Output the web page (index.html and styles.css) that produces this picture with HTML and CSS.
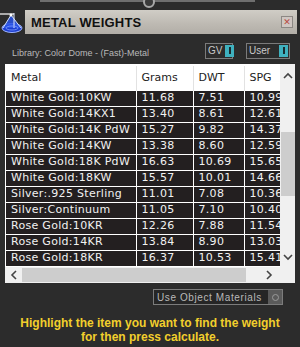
FILE: index.html
```html
<!DOCTYPE html>
<html>
<head>
<meta charset="utf-8">
<link rel="stylesheet" href="styles.css">
</head>
<body>
<div class="panel">
  <div class="topstrip"><span class="knob"></span></div>
  <div class="titlerow">
    <svg class="logo" width="25" height="24" viewBox="0 0 25 24">
      <ellipse cx="12" cy="18" rx="10" ry="4.5" fill="#1d3fd0" stroke="#9fb4ff" stroke-width="1"/>
      <path d="M3 18 L11 5 L21 18 Z" fill="#2a55e8" opacity="0.85"/>
      <path d="M3 18 L11 5 L21 18" fill="none" stroke="#cfe0ff" stroke-width="1"/>
      <path d="M0 4 L14 4" stroke="#ffffff" stroke-width="1.2"/>
      <path d="M14 3 L14 18" stroke="#dfe8ff" stroke-width="1"/>
      <circle cx="11" cy="5" r="1.5" fill="#ffffff"/>
      <ellipse cx="12" cy="18" rx="6" ry="2" fill="none" stroke="#7f9cff" stroke-width="0.8"/>
    </svg>
    <div class="titlebar">
      <span class="title">METAL WEIGHTS</span>
      <span class="close">✕</span>
    </div>
  </div>
  <div class="librow">
    <span class="lib">Library: Color Dome - (Fast)-Metal</span>
    <span class="toggles">
      <span class="tog tog-gv">GV<span class="sw"><i></i></span></span>
      <span class="tog tog-user">User<span class="sw"><i></i></span></span>
    </span>
  </div>
  <div class="grid">
    <div class="tablewrap">
      <table class="metals">
        <colgroup><col class="c1"><col class="c2"><col class="c3"><col class="c4"></colgroup>
        <thead>
          <tr><th>Metal</th><th>Grams</th><th>DWT</th><th>SPG</th></tr>
        </thead>
        <tbody>
          <tr><td>White Gold:10KW</td><td>11.68</td><td>7.51</td><td>10.99</td></tr>
          <tr><td>White Gold:14KX1</td><td>13.40</td><td>8.61</td><td>12.61</td></tr>
          <tr><td>White Gold:14K PdW</td><td>15.27</td><td>9.82</td><td>14.37</td></tr>
          <tr><td>White Gold:14KW</td><td>13.38</td><td>8.60</td><td>12.59</td></tr>
          <tr><td>White Gold:18K PdW</td><td>16.63</td><td>10.69</td><td>15.65</td></tr>
          <tr><td>White Gold:18KW</td><td>15.57</td><td>10.01</td><td>14.66</td></tr>
          <tr><td>Silver:.925 Sterling</td><td>11.01</td><td>7.08</td><td>10.36</td></tr>
          <tr><td>Silver:Continuum</td><td>11.05</td><td>7.10</td><td>10.40</td></tr>
          <tr><td>Rose Gold:10KR</td><td>12.26</td><td>7.88</td><td>11.54</td></tr>
          <tr><td>Rose Gold:14KR</td><td>13.84</td><td>8.90</td><td>13.03</td></tr>
          <tr><td>Rose Gold:18KR</td><td>16.37</td><td>10.53</td><td>15.41</td></tr>
        </tbody>
      </table>
    </div>
    <div class="vscroll">
      <span class="arrow up">
        <svg width="10" height="7" viewBox="0 0 10 7"><path d="M1 6 L5 2 L9 6" fill="none" stroke="#444" stroke-width="1.6"/></svg>
      </span>
      <span class="vtrack"><span class="vthumb"></span></span>
      <span class="arrow down">
        <svg width="10" height="7" viewBox="0 0 10 7"><path d="M1 1 L5 5 L9 1" fill="none" stroke="#444" stroke-width="1.6"/></svg>
      </span>
    </div>
    <div class="hscroll">
      <span class="harrow">
        <svg width="7" height="10" viewBox="0 0 7 10"><path d="M6 1 L2 5 L6 9" fill="none" stroke="#444" stroke-width="1.6"/></svg>
      </span>
      <span class="hthumb"></span>
      <span class="htrack"></span>
      <span class="harrow">
        <svg width="7" height="10" viewBox="0 0 7 10"><path d="M1 1 L5 5 L1 9" fill="none" stroke="#444" stroke-width="1.6"/></svg>
      </span>
      <span class="hpad"></span>
    </div>
  </div>
  <div class="optrow">
    <span class="opt">Use Object Materials<span class="optsw"><i></i></span></span>
  </div>
  <p class="hint">Highlight the item you want to find the weight<br>for then press calculate.</p>
</div>
</body>
</html>
```
FILE: styles.css
```css
* { box-sizing: border-box; }
html, body { margin: 0; padding: 0; }
body {
  width: 300px;
  height: 347px;
  background: #2c2c2c;
  overflow: hidden;
  font-family: "DejaVu Sans", Verdana, sans-serif;
}
.panel { width: 300px; height: 347px; }

.topstrip {
  height: 10px;
  position: relative;
  border-top: 2px solid #6f6f6f;
  margin: 0 45px 0 40px;
}
.knob {
  position: absolute;
  left: 103px;
  top: -6px;
  width: 12px;
  height: 12px;
  border-radius: 50%;
  background: #3a3a3a;
  border: 2px solid #a8a8a8;
}

.titlerow {
  display: flex;
  height: 24px;
  margin-right: 3px;
}
.logo { flex: none; display: block; }
.titlebar {
  flex: 1;
  display: flex;
  align-items: center;
  justify-content: space-between;
  background: linear-gradient(#d0cdc6, #bdb9b2 60%, #b2aea7);
  padding: 0 4px 0 6px;
}
.title {
  font-family: "Liberation Sans", Arial, sans-serif;
  font-weight: bold;
  font-size: 13px;
  color: #111;
  letter-spacing: 0.2px;
}
.close {
  width: 12px;
  height: 12px;
  border: 1px solid #8c8884;
  background: #cfc6c2;
  color: #b84a42;
  font-size: 9px;
  line-height: 10px;
  text-align: center;
  font-family: "DejaVu Sans", sans-serif;
}

.librow {
  display: flex;
  align-items: center;
  justify-content: space-between;
  height: 30px;
  padding: 4px 10px 0 12px;
}
.lib {
  font-family: "Liberation Sans", Arial, sans-serif;
  font-size: 9px;
  color: #b9b9b9;
  margin-top: 3px;
}
.toggles { display: flex; gap: 13px; margin-bottom: 1px; }
.tog {
  display: flex;
  align-items: center;
  height: 16px;
  border: 1px solid #7b7b7b;
  padding-left: 2px;
  font-family: "Liberation Sans", Arial, sans-serif;
  font-size: 10px;
  color: #c9c9c9;
  gap: 3px;
}
.tog-gv { width: 28px; }
.tog-user { width: 44px; }
.tog .sw {
  margin-left: auto;
  width: 9px;
  height: 12px;
  margin-right: 1px;
  background: #3fb1bf;
  display: flex;
  align-items: center;
  justify-content: center;
  flex: none;
}
.tog .sw i { display: block; width: 2px; height: 7px; background: #1a2a2e; }

.grid {
  margin: 0 5px 0 5px;
  display: grid;
  grid-template-columns: 275px 15px;
  grid-template-rows: 203px 16px;
  background: #fff;
}
.tablewrap {
  overflow: hidden;
  background: #fff;
  padding: 2px 0 0 1px;
}
.metals {
  border-collapse: collapse;
  table-layout: fixed;
  width: 300px;
  font-size: 11px;
}
.metals col.c1 { width: 130px; }
.metals col.c2 { width: 57px; }
.metals col.c3 { width: 51px; }
.metals col.c4 { width: 62px; }
.metals th {
  height: 24px;
  text-align: left;
  font-weight: normal;
  color: #222;
  padding: 0 0 0 5px;
  border-left: 1px solid #e2e2e2;
  background: #fff;
}
.metals th:first-child { border-left: none; }
.metals td {
  height: 16px;
  padding: 0 0 0 5px;
  background: #231f20;
  color: #f1f1f1;
  border: 1px solid #ffffff;
  white-space: nowrap;
  overflow: hidden;
  line-height: 14px;
  letter-spacing: 0.3px;
}
.metals td:first-child { border-left: none; }

.vscroll {
  background: #f0f0f0;
  display: flex;
  flex-direction: column;
  align-items: center;
}
.vscroll .arrow { height: 16px; display: flex; align-items: center; justify-content: center; }
.vscroll .arrow.up { margin-top: 3px; }
.vtrack { flex: 1; width: 100%; display: flex; flex-direction: column; padding-top: 49px; }
.vthumb { display: block; height: 64px; background: #cdcdcd; margin: 0 0 0 1px; width: 14px; }
.vscroll .arrow.down { margin-bottom: 2px; }

.hscroll {
  grid-column: 1 / 3;
  display: flex;
  align-items: stretch;
  background: #f0f0f0;
}
.harrow { width: 17px; display: flex; align-items: center; justify-content: center; flex: none; }
.hthumb { width: 224px; background: #cdcdcd; margin: 1px 0; flex: none; }
.htrack { flex: 1; }
.hpad { width: 17px; background: #f0f0f0; }

.optrow {
  display: flex;
  justify-content: flex-end;
  padding: 6px 17px 0 0;
}
.opt {
  display: flex;
  align-items: center;
  width: 130px;
  height: 16px;
  border: 1px solid #7c7c7c;
  background: #262626;
  font-family: "Liberation Sans", Arial, sans-serif;
  font-size: 10px;
  letter-spacing: 0.6px;
  color: #b9b9b9;
  padding-left: 3px;
}
.optsw {
  margin-left: auto;
  width: 14px;
  height: 14px;
  background: #5a5a5a;
  display: flex;
  align-items: center;
  justify-content: center;
}
.optsw i { display: block; width: 7px; height: 7px; border: 1px solid #9a9a9a; border-radius: 50%; }

.hint {
  margin: 11px 0 0 0;
  text-align: center;
  font-family: "Liberation Sans", Arial, sans-serif;
  font-weight: bold;
  font-size: 12px;
  line-height: 14px;
  color: #f2cf2c;
}
```
